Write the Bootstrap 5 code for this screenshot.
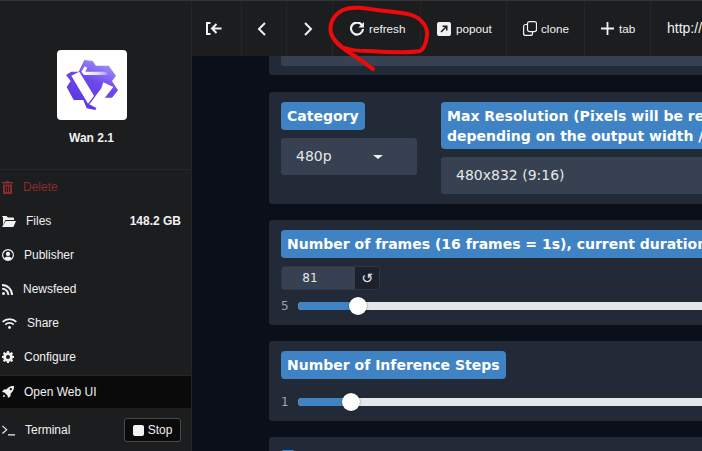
<!DOCTYPE html>
<html lang="en">
<head>
    <meta charset="utf-8">
    <title>Wan 2.1</title>
    <link href="https://cdn.jsdelivr.net/npm/bootstrap@5.3.3/dist/css/bootstrap.min.css" rel="stylesheet">
    <style>
        html, body { height: 451px; overflow: hidden; }
        body { background: #0b0f19; font-family: "Liberation Sans", Arial, sans-serif; font-size: 12px; color: #f1f1f1; border-top: 1px solid #333; position: relative; }
        .shell { height: 450px; }

        .side-panel { width: 192px; flex: none; background: #1c1d1f; border-right: 1px solid #232527; }
        .app-head { height: 169px; padding-top: 49px; padding-right: 8px; border-bottom: 1px solid #262729; }
        .app-logo { width: 70px; height: 70px; background: #fff; border-radius: 4px; }
        .app-name { margin-top: 9px; font-weight: 700; }
        .side-row { height: 34px; padding: 0 10px 0 2px; gap: 10px; }
        .side-row svg { flex: none; fill: currentColor; }
        .side-row.danger { color: #8a2c2e; }
        .side-row.active-row { background: #0a0a0a; height: 33px; margin-top: 1px; border-top: 1px solid #252628; }
        .side-row.term-row { height: 43px; padding-top: 1px; }
        .stop-btn { margin-left: auto; width: 57px; height: 24px; background: #0a0a0a; border: 1px solid #4a4a4a; border-radius: 3px; color: #f1f1f1; font-size: 12px; gap: 4px; padding: 0; }
        .stop-sq { width: 11px; height: 11px; background: #f1f1f1; border-radius: 2px; }

        .top-strip { height: 55px; background: #1c1d1f; flex: none; font-size: 11.7px; }
        .top-item { height: 100%; padding-left: 16px; gap: 5px; border-right: 1px solid #232527; white-space: nowrap; flex: none; }
        .top-item svg { flex: none; }
        .top-item.w-a { width: 50px; padding: 0 6px 0 0; justify-content: center; }
        .top-item.w-b { width: 45px; padding: 0 6px 0 0; justify-content: center; }
        .top-item.w-c { width: 46px; padding: 0 2px 0 0; justify-content: center; }
        .top-item.w-refresh { width: 88px; padding-left: 17px; }
        .top-item.w-popout { width: 86px; }
        .top-item.w-clone { width: 78px; gap: 4px; }
        .top-item.w-tab { width: 66px; }
        .url-text { font-size: 14px; }

        .grad-area { padding-left: 77px; font-family: "DejaVu Sans", Verdana, sans-serif; font-size: 14px; width: 700px; }
        .grad-box { width: 620px; background: #222a38; border-radius: 3px; padding: 10px 12px; margin-bottom: 16px; color: #e5e7eb; }
        .grad-box.stub { padding: 0 12px 9px; height: 19px; margin-bottom: 17px; border-radius: 0 0 3px 3px; }
        .stub-inner { height: 10px; background: #374151; border-radius: 0 0 3px 3px; }
        .blue-tag { display: block; width: fit-content; background: #3f83c4; color: #fff; font-weight: 700; line-height: 20px; padding: 4px 6px; border-radius: 4px; white-space: nowrap; }
        .blue-tag.two-line { padding-bottom: 3px; }
        .pick-field { height: 37px; background: #374151; border-radius: 3px; margin-top: 8px; padding: 0 15px; }
        .pick-caret { width: 0; height: 0; margin-left: auto; margin-right: 19px; border-left: 5px solid transparent; border-right: 5px solid transparent; border-top: 4px solid #f1f1f1; }
        .col-cat { width: 136px; flex: none; }
        .col-res { margin-left: 24px; flex: none; width: 436px; }
        .frame-input { width: 99px; height: 24px; margin-top: 8px; border: 1px solid #2d3646; border-radius: 3px; overflow: hidden; font-size: 12px; }
        .frame-num { width: 73px; background: #374151; text-align: center; padding-right: 17px; line-height: 22px; }
        .frame-reset { flex: 1; background: #1b212d; text-align: center; line-height: 22px; font-size: 14px; }
        .slide-row { height: 18px; font-size: 12px; color: #9ca3af; }
        .frame-slide { margin-top: 7px; }
        .step-slide { margin-top: 14px; }
        .slide-num { width: 17px; flex: none; }
        .slide-track { position: relative; width: 500px; height: 8px; background: #e5e7eb; border-radius: 4px; }
        .slide-fill { height: 100%; background: #3f83c4; border-radius: 4px 0 0 4px; }
        .slide-thumb { position: absolute; top: -5px; width: 18px; height: 18px; margin-left: -9px; background: #fff; border-radius: 50%; box-shadow: 0 0 2px rgba(0, 0, 0, .5); }
        .mark-box { width: 14px; height: 14px; background: #3f83c4; border-radius: 3px; margin-top: 3px; }
        .red-scribble { position: absolute; left: 0; top: -1px; pointer-events: none; }
    </style>
</head>
<body>
    <div class="shell d-flex">
        <div class="side-panel d-flex flex-column">
            <div class="app-head d-flex flex-column align-items-center">
                <div class="app-logo d-flex align-items-center justify-content-center">
                    <svg width="60" height="60" viewBox="0 0 180 180">
                        <defs>
                            <linearGradient id="qg" x1="0.8" y1="0" x2="0.3" y2="1">
                                <stop offset="0" stop-color="#a99bf7"/>
                                <stop offset="0.45" stop-color="#6c48ec"/>
                                <stop offset="1" stop-color="#5a34e0"/>
                            </linearGradient>
                            <linearGradient id="qs" x1="0" y1="0" x2="1" y2="0">
                                <stop offset="0" stop-color="#fff"/>
                                <stop offset="0.6" stop-color="#e4defc"/>
                                <stop offset="1" stop-color="#a99bf7"/>
                            </linearGradient>
                        </defs>
                        <polygon fill="url(#qg)" points="67,15 92,18 102,32 140,32 162,62 150,78 168,106 150,128 122,128 100,165 74,160 64,135 35,135 14,96 26,78 12,60 28,50 50,50"/>
                        <polygon fill="#fff" points="28,62 52,50 96,122 78,146"/>
                        <polygon fill="url(#qs)" points="58,50 68,34 76,38 70,50 132,50 136,60 66,60"/>
                        <polygon fill="#fff" points="124,82 154,96 104,160 82,148 118,100"/>
                    </svg>
                </div>
                <div class="app-name">Wan 2.1</div>
            </div>
            <div class="side-row danger d-flex align-items-center">
                <svg width="11" height="13" viewBox="0 0 11 13"><path d="M4 0h3l.5 1H11v1.500H0V1h3.500zM1 3.500h9V12a1 1 0 0 1-1 1H2a1 1 0 0 1-1-1zm2 1.500v6h1V5zm2 0v6h1V5zm2 0v6h1V5z" fill-rule="evenodd"/></svg>
                <span>Delete</span>
            </div>
            <div class="side-row d-flex align-items-center">
                <svg width="14" height="11" viewBox="0 0 14 11"><path d="M0 1a1 1 0 0 1 1-1h3.500L6 1.500h5a1 1 0 0 1 1 1V4H3.500L1 9V1zM3.800 5H14l-2.600 6H0z"/></svg>
                <span>Files</span>
                <span class="ms-auto fw-bold">148.2 GB</span>
            </div>
            <div class="side-row d-flex align-items-center">
                <svg width="12" height="12" viewBox="0 0 13 13"><path fill-rule="evenodd" d="M6.500 0a6.500 6.500 0 1 1 0 13 6.500 6.500 0 0 1 0-13zm0 1.300a5.200 5.200 0 0 0-3.900 8.600C3.300 9 4.500 8.500 6.500 8.500s3.200.5 3.900 1.400A5.200 5.200 0 0 0 6.500 1.300zm0 1.700a2.300 2.300 0 1 1 0 4.600 2.300 2.300 0 0 1 0-4.600z"/></svg>
                <span>Publisher</span>
            </div>
            <div class="side-row d-flex align-items-center">
                <svg width="11" height="11" viewBox="0 0 11 11"><circle cx="1.500" cy="9.500" r="1.500"/><path d="M0 3.700a7.300 7.300 0 0 1 7.300 7.300H5.400A5.400 5.400 0 0 0 0 5.600zM0 0a11 11 0 0 1 11 11H9.100A9.100 9.100 0 0 0 0 1.900z"/></svg>
                <span>Newsfeed</span>
            </div>
            <div class="side-row d-flex align-items-center">
                <svg width="15" height="11" viewBox="0 0 15 11"><circle cx="7.500" cy="9.500" r="1.400"/><path d="M0 3.200a10.800 10.800 0 0 1 15 0l-1.200 1.300a9 9 0 0 0-12.600 0zM2.700 6a7 7 0 0 1 9.600 0l-1.200 1.300a5.200 5.200 0 0 0-7.200 0z"/></svg>
                <span>Share</span>
            </div>
            <div class="side-row d-flex align-items-center">
                <svg width="12" height="12" viewBox="0 0 12 12"><path fill-rule="evenodd" d="M5 0h2l.3 1.600 1 .4L9.700 1l1.400 1.400-1 1.400.4 1L12 5v2l-1.500.3-.4 1 1 1.400-1.400 1.400-1.400-1-1 .4L7 12H5l-.3-1.500-1-.4-1.400 1L.9 9.700l1-1.400-.4-1L0 7V5l1.500-.3.4-1-1-1.400L2.300 1l1.400 1 1-.4zM6 4a2 2 0 1 0 0 4 2 2 0 0 0 0-4z"/></svg>
                <span>Configure</span>
            </div>
            <div class="side-row active-row d-flex align-items-center">
                <svg width="12" height="12" viewBox="0 0 13 13"><path d="M13 0c.2 3.500-1.200 6.200-3.600 8l-.2 3L6.500 13l-.6-2.700L2.700 7.100 0 6.500 2 3.800l3-.2C6.800 1.200 9.500-.2 13 0zM9.500 2.300a1.200 1.200 0 1 0 0 2.400 1.200 1.200 0 0 0 0-2.400zM2 9.300l1.700 1.700L.8 12.200z"/></svg>
                <span>Open Web UI</span>
            </div>
            <div class="side-row term-row d-flex align-items-center">
                <svg width="13" height="11" viewBox="0 0 14 11"><path d="M.8 0L6 4.600.8 9.300 0 8.300 4.200 4.600 0 1zM6.500 9.500H14V11H6.500z"/></svg>
                <span>Terminal</span>
                <button class="stop-btn d-flex align-items-center justify-content-center"><span class="stop-sq"></span>Stop</button>
            </div>
        </div>

        <div class="flex-grow-1 d-flex flex-column overflow-hidden">
            <div class="top-strip d-flex align-items-center">
                <div class="top-item w-a d-flex align-items-center">
                    <svg width="16" height="13" viewBox="0 0 16 13" fill="none" stroke="#f1f1f1" stroke-width="2"><path d="M4.500 1H1v11h3.500"/><path d="M15.500 6.500H6.500M10.500 2l-4.500 4.500 4.500 4.500"/></svg>
                </div>
                <div class="top-item w-b d-flex align-items-center">
                    <svg width="9" height="14" viewBox="0 0 9 14" fill="none" stroke="#f1f1f1" stroke-width="2"><path d="M8 1L2 7l6 6"/></svg>
                </div>
                <div class="top-item w-c d-flex align-items-center">
                    <svg width="9" height="14" viewBox="0 0 9 14" fill="none" stroke="#f1f1f1" stroke-width="2"><path d="M1 1l6 6-6 6"/></svg>
                </div>
                <div class="top-item w-refresh d-flex align-items-center">
                    <svg width="14" height="14" viewBox="0 0 14 14"><path d="M12 3.200A6 6 0 1 0 13 7" fill="none" stroke="#f1f1f1" stroke-width="2.200"/><path d="M8.400 5.600H14V0z" fill="#f1f1f1"/></svg>
                    <span>refresh</span>
                </div>
                <div class="top-item w-popout d-flex align-items-center">
                    <svg width="14" height="14" viewBox="0 0 14 14"><path fill="#f1f1f1" fill-rule="evenodd" d="M2 0h10a2 2 0 0 1 2 2v10a2 2 0 0 1-2 2H2a2 2 0 0 1-2-2V2a2 2 0 0 1 2-2zm3.500 3.500V5h2.400L3.500 9.400l1.100 1.100L9 6.100v2.400h1.500v-5z"/></svg>
                    <span>popout</span>
                </div>
                <div class="top-item w-clone d-flex align-items-center">
                    <svg width="14" height="15" viewBox="0 0 14 15" fill="none" stroke="#f1f1f1" stroke-width="1.200"><rect x="4.500" y=".6" width="9" height="10" rx="2"/><path d="M4.500 3.500H2.600a2 2 0 0 0-2 2v6.900a2 2 0 0 0 2 2h4.900a2 2 0 0 0 2-2v-1.900"/></svg>
                    <span>clone</span>
                </div>
                <div class="top-item w-tab d-flex align-items-center">
                    <svg width="13" height="13" viewBox="0 0 13 13"><path fill="#f1f1f1" d="M5.600 0h1.800v5.600H13v1.800H7.400V13H5.600V7.400H0V5.600h5.600z"/></svg>
                    <span>tab</span>
                </div>
                <div class="top-item url-text d-flex align-items-center border-0">http://127.0.0.1:7860</div>
            </div>

            <div class="grad-area flex-grow-1 overflow-hidden">
                <div class="grad-box stub"><div class="stub-inner"></div></div>

                <div class="grad-box d-flex">
                    <div class="col-cat">
                        <span class="blue-tag">Category</span>
                        <div class="pick-field d-flex align-items-center"><span>480p</span><span class="pick-caret"></span></div>
                    </div>
                    <div class="col-res">
                        <span class="blue-tag two-line">Max Resolution (Pixels will be resized<br>depending on the output width / height)</span>
                        <div class="pick-field d-flex align-items-center"><span>480x832 (9:16)</span></div>
                    </div>
                </div>

                <div class="grad-box">
                    <span class="blue-tag">Number of frames (16 frames = 1s), current duration: 5s</span>
                    <div class="frame-input d-flex">
                        <div class="frame-num">81</div>
                        <div class="frame-reset">↺</div>
                    </div>
                    <div class="slide-row frame-slide d-flex align-items-center">
                        <span class="slide-num">5</span>
                        <div class="slide-track">
                            <div class="slide-fill" style="width: 60px"></div>
                            <div class="slide-thumb" style="left: 60px"></div>
                        </div>
                    </div>
                </div>

                <div class="grad-box">
                    <span class="blue-tag">Number of Inference Steps</span>
                    <div class="slide-row step-slide d-flex align-items-center">
                        <span class="slide-num">1</span>
                        <div class="slide-track">
                            <div class="slide-fill" style="width: 53px"></div>
                            <div class="slide-thumb" style="left: 53px"></div>
                        </div>
                    </div>
                </div>

                <div class="grad-box"><div class="mark-box"></div></div>
            </div>
        </div>
    </div>

    <svg class="red-scribble" width="702" height="80" viewBox="0 0 702 80" fill="none" stroke="#ee0a0a" stroke-width="4" stroke-linecap="round" stroke-linejoin="round">
        <path d="M373 69C366 64 358 58 350 53C341 47 333 41 331 33C329 24 333 15 343 10C352 6 365 8 377 10C390 12 405 12 414 16C423 20 428 28 427 36C426 44 424 49 420 51C410 53 385 52 368 51C358 51 350 50 345 48"/>
    </svg>
</body>
</html>
